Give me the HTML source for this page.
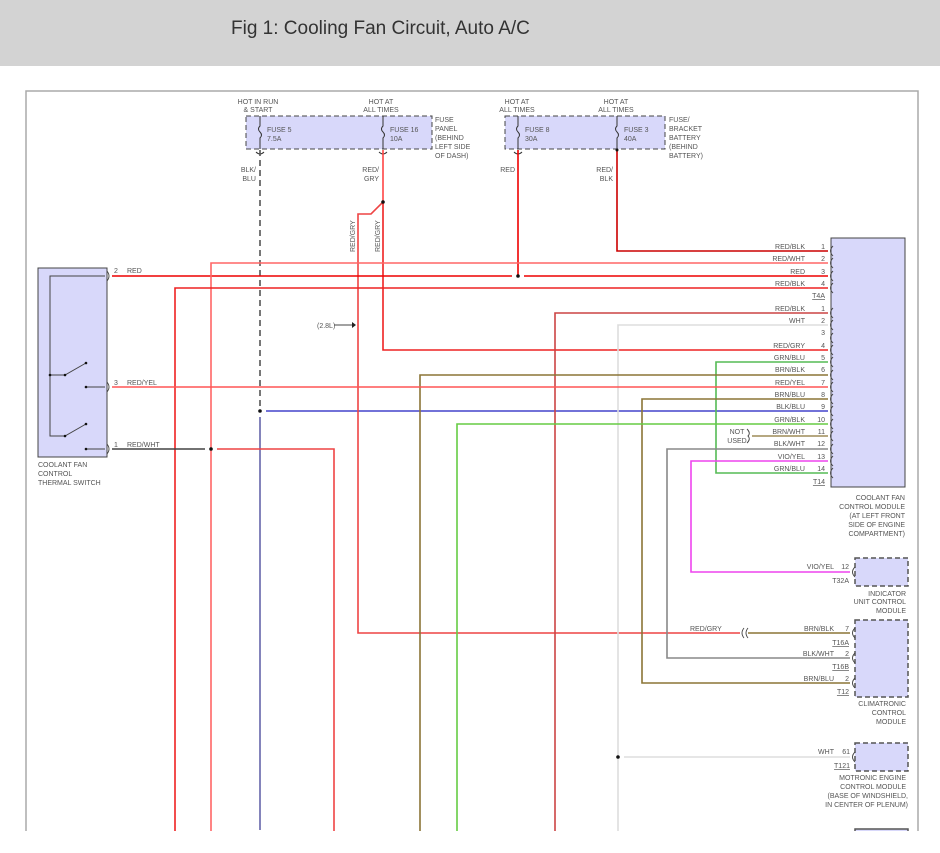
<!DOCTYPE html>
<html><head><meta charset="utf-8"><style>
html,body{margin:0;padding:0;background:#fff;width:940px;height:853px;overflow:hidden}
.hdr{position:absolute;left:0;top:0;width:940px;height:66px;background:#d3d3d3}
.hdr span{position:absolute;left:231px;top:18px;font:19px "Liberation Sans",sans-serif;color:#333}
svg{position:absolute;left:0;top:0}
text{font-family:"Liberation Sans",sans-serif;font-size:7px;fill:#555}
.r{text-anchor:end}.c{text-anchor:middle}
</style></head><body>
<div class="hdr"><span>Fig 1: Cooling Fan Circuit, Auto A/C</span></div>
<svg width="940" height="853" viewBox="0 0 940 853">
<g fill="none" stroke="#aaa" stroke-width="1.5">
<path d="M26 853V91H918V853"/>
</g>
<rect x="246" y="116" width="186" height="33" fill="#d8d8fa" stroke="#444" stroke-dasharray="5,3"/>
<rect x="505" y="116" width="160" height="33" fill="#d8d8fa" stroke="#444" stroke-dasharray="5,3"/>
<rect x="38" y="268" width="69" height="189" fill="#d8d8fa" stroke="#444"/>
<rect x="831" y="238" width="74" height="249" fill="#d8d8fa" stroke="#444"/>
<rect x="855" y="558" width="53" height="28" fill="#d8d8fa" stroke="#555" stroke-width="1.5" stroke-dasharray="5,3"/>
<rect x="855" y="620" width="53" height="77" fill="#d8d8fa" stroke="#555" stroke-width="1.5" stroke-dasharray="5,3"/>
<rect x="855" y="743" width="53" height="28" fill="#d8d8fa" stroke="#555" stroke-width="1.5" stroke-dasharray="5,3"/>
<path d="M855 853V829H908V853" fill="#d8d8fa" stroke="#555" stroke-width="1.5"/>
<g stroke="#333" fill="none" stroke-width="1">
<path d="M260 116V126q-3 3 0 6q3 3 0 6V149"/>
<path d="M383 116V126q-3 3 0 6q3 3 0 6V149"/>
<path d="M518 116V126q-3 3 0 6q3 3 0 6V149"/>
<path d="M617 116V126q-3 3 0 6q3 3 0 6V149"/>
<path d="M256 152q4 4 8 0M379 152q4 4 8 0M514 152q4 4 8 0"/>
</g>
<g stroke="#444" fill="none" stroke-width="1">
<path d="M105 276H50V436H65L86 424"/><path d="M50 375H65L86 363"/>
<path d="M86 387H105M86 449H105"/>
</g>
<g fill="none" stroke-width="1.6">
<path d="M260 150V411" stroke="#555" stroke-dasharray="6,4"/>
<path d="M260 417V830" stroke="#6666aa"/>
<path d="M266 411H828" stroke="#4444cc"/>
<path d="M383 150V202" stroke="#f44"/>
<path d="M383 202V350H828" stroke="#e22"/>
<path d="M383 202L371 214H358V633H740" stroke="#e44"/>
<path d="M748 633H850" stroke="#8b7536"/>
<path d="M518 150V276" stroke="#e00"/>
<path d="M112 276H512M524 276H828" stroke="#e00"/>
<path d="M617 150V251H828" stroke="#c00"/>
<path d="M211 853V263H828" stroke="#f66"/>
<path d="M175 853V288H828" stroke="#e22"/>
<path d="M555 853V313H828" stroke="#c44"/>
<path d="M618 853V325H828" stroke="#ddd"/>
<path d="M624 757H850" stroke="#ddd"/>
<path d="M828 362H716V473H828" stroke="#5b5"/>
<path d="M420 853V375H828" stroke="#8b7536"/>
<path d="M112 387H828" stroke="#f55"/>
<path d="M828 399H642V683H850" stroke="#8b7536"/>
<path d="M457 853V424H828" stroke="#6c4"/>
<path d="M752 436H828" stroke="#8b7536" stroke-width="1.2"/>
<path d="M828 449H667V658H850" stroke="#888"/>
<path d="M828 461H691V572H850" stroke="#e4e"/>
<path d="M112 449H205" stroke="#444"/>
<path d="M217 449H334V853" stroke="#e44"/>
<path d="M334 325H352" stroke="#444" stroke-width="1"/>
</g>
<path d="M352 322L356 325L352 328Z" fill="#222"/>
<g fill="#111"><circle cx="383" cy="202" r="1.8"/><circle cx="518" cy="276" r="1.8"/><circle cx="260" cy="411" r="1.8"/><circle cx="211" cy="449" r="1.8"/><circle cx="618" cy="757" r="1.8"/><circle cx="617" cy="150" r="1.5"/>
<circle cx="65" cy="375" r="1.3"/><circle cx="86" cy="363" r="1.3"/><circle cx="65" cy="436" r="1.3"/><circle cx="86" cy="424" r="1.3"/><circle cx="86" cy="387" r="1.3"/><circle cx="86" cy="449" r="1.3"/><circle cx="50" cy="375" r="1.3"/></g>
<g fill="none" stroke="#444" stroke-width="0.9">
<path d="M107 271q4 5 0 10M107 382q4 5 0 10M107 444q4 5 0 10"/>
<path d="M833 246q-5 5 0 10M833 258q-5 5 0 10M833 271q-5 5 0 10M833 283q-5 5 0 10M833 308q-5 5 0 10M833 320q-5 5 0 10M833 333q-5 5 0 10M833 345q-5 5 0 10M833 357q-5 5 0 10M833 370q-5 5 0 10M833 382q-5 5 0 10M833 394q-5 5 0 10M833 406q-5 5 0 10M833 419q-5 5 0 10M833 431q-5 5 0 10M833 444q-5 5 0 10M833 456q-5 5 0 10M833 468q-5 5 0 10"/>
<path d="M855 567q-5 5 0 10M855 628q-5 5 0 10M855 653q-5 5 0 10M855 678q-5 5 0 10M855 752q-5 5 0 10"/>
<path d="M744 628q-4 5 0 10M748 628q-4 5 0 10M747 429q4 4 1 7q3 3 -1 7"/>
</g>
<text class="c" x="258" y="104">HOT IN RUN</text><text class="c" x="258" y="112">&amp; START</text>
<text class="c" x="381" y="104">HOT AT</text><text class="c" x="381" y="112">ALL TIMES</text>
<text class="c" x="517" y="104">HOT AT</text><text class="c" x="517" y="112">ALL TIMES</text>
<text class="c" x="616" y="104">HOT AT</text><text class="c" x="616" y="112">ALL TIMES</text>
<text x="267" y="132">FUSE 5</text><text x="267" y="141">7.5A</text>
<text x="390" y="132">FUSE 16</text><text x="390" y="141">10A</text>
<text x="525" y="132">FUSE 8</text><text x="525" y="141">30A</text>
<text x="624" y="132">FUSE 3</text><text x="624" y="141">40A</text>
<text x="435" y="122">FUSE</text><text x="435" y="131">PANEL</text><text x="435" y="140">(BEHIND</text><text x="435" y="149">LEFT SIDE</text><text x="435" y="158">OF DASH)</text>
<text x="669" y="122">FUSE/</text><text x="669" y="131">BRACKET</text><text x="669" y="140">BATTERY</text><text x="669" y="149">(BEHIND</text><text x="669" y="158">BATTERY)</text>
<text class="r" x="256" y="172">BLK/</text><text class="r" x="256" y="181">BLU</text>
<text class="r" x="379" y="172">RED/</text><text class="r" x="379" y="181">GRY</text>
<text class="r" x="515" y="172">RED</text>
<text class="r" x="613" y="172">RED/</text><text class="r" x="613" y="181">BLK</text>
<text transform="translate(355,252) rotate(-90)">RED/GRY</text>
<text transform="translate(380,252) rotate(-90)">RED/GRY</text>
<text x="317" y="328">(2.8L)</text>
<text x="114" y="273">2</text><text x="127" y="273">RED</text>
<text x="114" y="385">3</text><text x="127" y="385">RED/YEL</text>
<text x="114" y="447">1</text><text x="127" y="447">RED/WHT</text>
<text x="38" y="467">COOLANT FAN</text><text x="38" y="476">CONTROL</text><text x="38" y="485">THERMAL SWITCH</text>
<g>
<text class="r" x="805" y="249">RED/BLK</text><text class="r" x="825" y="249">1</text>
<text class="r" x="805" y="261">RED/WHT</text><text class="r" x="825" y="261">2</text>
<text class="r" x="805" y="274">RED</text><text class="r" x="825" y="274">3</text>
<text class="r" x="805" y="286">RED/BLK</text><text class="r" x="825" y="286">4</text>
<text class="r" x="825" y="298" text-decoration="underline">T4A</text>
<text class="r" x="805" y="311">RED/BLK</text><text class="r" x="825" y="311">1</text>
<text class="r" x="805" y="323">WHT</text><text class="r" x="825" y="323">2</text>
<text class="r" x="825" y="335">3</text>
<text class="r" x="805" y="348">RED/GRY</text><text class="r" x="825" y="348">4</text>
<text class="r" x="805" y="360">GRN/BLU</text><text class="r" x="825" y="360">5</text>
<text class="r" x="805" y="372">BRN/BLK</text><text class="r" x="825" y="372">6</text>
<text class="r" x="805" y="385">RED/YEL</text><text class="r" x="825" y="385">7</text>
<text class="r" x="805" y="397">BRN/BLU</text><text class="r" x="825" y="397">8</text>
<text class="r" x="805" y="409">BLK/BLU</text><text class="r" x="825" y="409">9</text>
<text class="r" x="805" y="422">GRN/BLK</text><text class="r" x="825" y="422">10</text>
<text class="r" x="805" y="434">BRN/WHT</text><text class="r" x="825" y="434">11</text>
<text class="r" x="805" y="446">BLK/WHT</text><text class="r" x="825" y="446">12</text>
<text class="r" x="805" y="459">VIO/YEL</text><text class="r" x="825" y="459">13</text>
<text class="r" x="805" y="471">GRN/BLU</text><text class="r" x="825" y="471">14</text>
<text class="r" x="825" y="484" text-decoration="underline">T14</text>
<text class="r" x="905" y="500">COOLANT FAN</text><text class="r" x="905" y="509">CONTROL MODULE</text><text class="r" x="905" y="518">(AT LEFT FRONT</text><text class="r" x="905" y="527">SIDE OF ENGINE</text><text class="r" x="905" y="536">COMPARTMENT)</text>
<text class="r" x="834" y="569">VIO/YEL</text><text class="r" x="849" y="569">12</text>
<text class="r" x="849" y="583">T32A</text>
<text class="r" x="906" y="596">INDICATOR</text><text class="r" x="906" y="604">UNIT CONTROL</text><text class="r" x="906" y="613">MODULE</text>
<text class="r" x="834" y="631">BRN/BLK</text><text class="r" x="849" y="631">7</text>
<text class="r" x="849" y="645" text-decoration="underline">T16A</text>
<text class="r" x="834" y="656">BLK/WHT</text><text class="r" x="849" y="656">2</text>
<text class="r" x="849" y="669" text-decoration="underline">T16B</text>
<text class="r" x="834" y="681">BRN/BLU</text><text class="r" x="849" y="681">2</text>
<text class="r" x="849" y="694" text-decoration="underline">T12</text>
<text class="r" x="906" y="706">CLIMATRONIC</text><text class="r" x="906" y="715">CONTROL</text><text class="r" x="906" y="724">MODULE</text>
<text class="r" x="834" y="754">WHT</text><text class="r" x="850" y="754">61</text>
<text class="r" x="850" y="768" text-decoration="underline">T121</text>
<text class="r" x="906" y="780">MOTRONIC ENGINE</text><text class="r" x="906" y="789">CONTROL MODULE</text><text class="r" x="908" y="798">(BASE OF WINDSHIELD,</text><text class="r" x="908" y="807">IN CENTER OF PLENUM)</text>
</g>
<text x="690" y="631">RED/GRY</text>
<text class="c" x="737" y="434">NOT</text><text class="c" x="737" y="443">USED</text>
<rect x="0" y="831" width="940" height="22" fill="#fff"/>
</svg>
</body></html>
